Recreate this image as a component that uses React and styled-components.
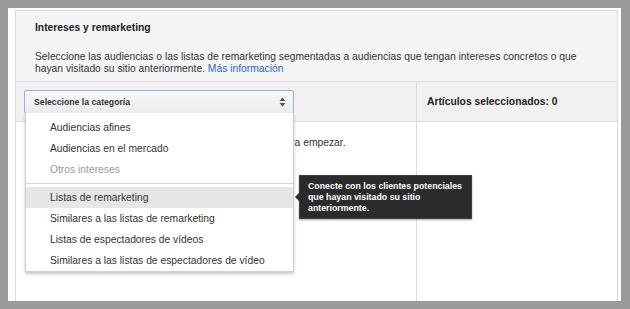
import React from "react";
import styled, { createGlobalStyle } from "styled-components";

const GlobalStyle = createGlobalStyle`
  html, body {
    margin: 0;
    padding: 0;
    background: #9b9b9b;
  }
  body {
    padding: 8px;
    font-family: "Liberation Sans", Arial, sans-serif;
    color: #333;
  }
`;

const Frame = styled.div`
  box-sizing: border-box;
  width: 613px;
  height: 293px;
  background: #fff;
  padding: 2px 3px 0 7px;
  overflow: hidden;
`;

const Panel = styled.div`
  box-sizing: border-box;
  height: 100%;
  display: flex;
  flex-direction: column;
  border: 1px solid #dcdcdc;
  border-bottom: none;
`;

const Header = styled.div`
  background: #f5f5f5;
  border-bottom: 1px solid #dcdcdc;
  padding: 11px 19px 6px;
`;

const Title = styled.div`
  font-size: 10.3px;
  line-height: 12px;
  font-weight: 700;
  color: #222;
  margin-bottom: 17px;
`;

const Description = styled.div`
  font-size: 10.3px;
  line-height: 12px;
  color: #333;
`;

const Link = styled.a`
  color: #2a66c8;
  text-decoration: none;
`;

const Columns = styled.div`
  flex: 1;
  display: grid;
  grid-template-columns: 401px 1fr;
  grid-template-rows: 40px 1fr;
`;

const HeadCell = styled.div`
  box-sizing: border-box;
  background: #f1f1f1;
  border-bottom: 1px solid #dcdcdc;
  border-right: ${(p) => (p.divider ? "1px solid #dcdcdc" : "none")};
  padding: ${(p) => (p.divider ? "8px 0 0 8px" : "0 10px")};
  display: flex;
  align-items: ${(p) => (p.divider ? "flex-start" : "center")};
`;

const HeadLabel = styled.span`
  font-size: 10.3px;
  font-weight: 700;
  color: #222;
`;

const BodyCell = styled.div`
  box-sizing: border-box;
  border-right: ${(p) => (p.divider ? "1px solid #dcdcdc" : "none")};
  padding: 15px 0 0 41px;
  font-size: 10.3px;
  line-height: 12px;
  color: #333;
`;

const SelectWrap = styled.div`
  position: relative;
  z-index: 2;
`;

const Select = styled.div`
  box-sizing: border-box;
  width: 270px;
  height: 24px;
  border: 1px solid #8fb1ea;
  border-radius: 2px;
  background: linear-gradient(#f8f8f8, #ebebeb);
  display: flex;
  align-items: center;
  justify-content: space-between;
  padding: 0 7px 0 9px;
  font-size: 8.7px;
  font-weight: 700;
  color: #333;
`;

const Menu = styled.div`
  position: absolute;
  top: 23px;
  left: 1px;
  box-sizing: border-box;
  width: 269px;
  background: #fff;
  border: 1px solid #cfcfcf;
  border-top: none;
  box-shadow: 0 2px 3px rgba(0, 0, 0, 0.22);
  padding: 4px 0 0;
`;

const Item = styled.div`
  height: 21px;
  line-height: 21px;
  padding-left: 24px;
  font-size: 10.3px;
  font-weight: 400;
  color: ${(p) => (p.muted ? "#9a9a9a" : "#333")};
  background: ${(p) => (p.active ? "#e6e6e6" : "transparent")};
`;

const Separator = styled.div`
  height: 1px;
  background: #d6d6d6;
  margin: 3px 0;
`;

const Tooltip = styled.div`
  position: absolute;
  left: 275px;
  top: 85px;
  box-sizing: border-box;
  width: 173px;
  height: 44px;
  background: #2b2b2b;
  border: 1px solid #3e3e3e;
  box-shadow: 0 1px 2px rgba(0, 0, 0, 0.35);
  padding: 5px 8px;
  font-size: 8.8px;
  line-height: 10.8px;
  font-weight: 700;
  color: #fff;

  &::before {
    content: "";
    position: absolute;
    left: -5px;
    top: 16px;
    border-top: 5px solid transparent;
    border-bottom: 5px solid transparent;
    border-right: 5px solid #2b2b2b;
  }
`;

function SortArrows() {
  return (
    <svg width="7" height="10" viewBox="0 0 7 10">
      <path d="M3.5 0.5 L6.5 4 L0.5 4 Z" fill="#555" />
      <path d="M0.5 6 L6.5 6 L3.5 9.5 Z" fill="#555" />
    </svg>
  );
}

const items = [
  { label: "Audiencias afines" },
  { label: "Audiencias en el mercado" },
  { label: "Otros intereses", muted: true },
  { separator: true },
  { label: "Listas de remarketing", active: true },
  { label: "Similares a las listas de remarketing" },
  { label: "Listas de espectadores de vídeos" },
  { label: "Similares a las listas de espectadores de vídeo" },
];

export default function App() {
  return (
    <>
      <GlobalStyle />
      <Frame>
        <Panel>
          <Header>
            <Title>Intereses y remarketing</Title>
            <Description>
              Seleccione las audiencias o las listas de remarketing segmentadas a
              audiencias que tengan intereses concretos o que hayan visitado su
              sitio anteriormente. <Link href="#">Más información</Link>
            </Description>
          </Header>
          <Columns>
            <HeadCell divider>
              <SelectWrap>
                <Select>
                  <span>Seleccione la categoría</span>
                  <SortArrows />
                </Select>
                <Menu>
                  {items.map((it, i) =>
                    it.separator ? (
                      <Separator key={i} />
                    ) : (
                      <Item key={i} muted={it.muted} active={it.active}>
                        {it.label}
                      </Item>
                    )
                  )}
                </Menu>
                <Tooltip>
                  Conecte con los clientes potenciales que hayan visitado su
                  sitio anteriormente.
                </Tooltip>
              </SelectWrap>
            </HeadCell>
            <HeadCell>
              <HeadLabel>Artículos seleccionados: 0</HeadLabel>
            </HeadCell>
            <BodyCell divider>
              Seleccione una categoría del menú desplegable para empezar.
            </BodyCell>
            <BodyCell />
          </Columns>
        </Panel>
      </Frame>
    </>
  );
}
